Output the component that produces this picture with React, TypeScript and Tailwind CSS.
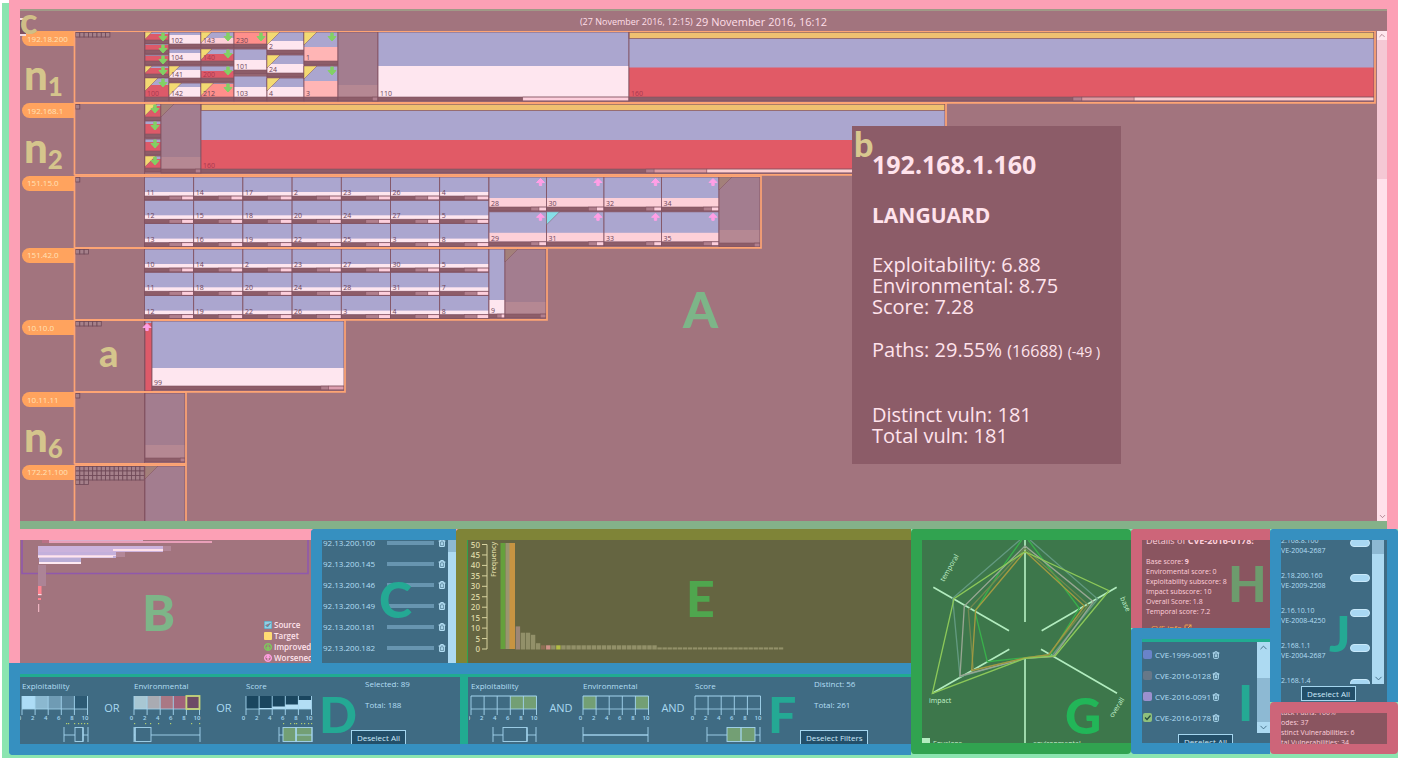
import React from "react";
import { Trash2, ChevronUp, ChevronDown, SquareArrowOutUpRight } from "lucide-react";

const C = {
  blue: "#aba6cf",
  pale: "#fee6ef",
  pink: "#fdd0d8",
  salmon: "#ffb5b5",
  coral: "#ff8f8b",
  red: "#dd5a69",
  gold: "#efc070",
  dark: "#8d5d69",
  mid: "#b17f8d",
  line: "#80505f",
};

type Cell = {
  x: number;
  y: number;
  w: number;
  h: number;
  split: number;
  low: string;
  label?: string;
  tri?: string;
  arrow?: "up" | "down";
  bar?: [number, number, string][];
  faded?: boolean;
  gold?: boolean;
};

const stdBar: [number, number, string][] = [
  [0.5, 0.76, C.mid],
  [0.76, 1, "#fdcfdc"],
];
const narrowBar: [number, number, string][] = [
  [0.73, 0.87, C.mid],
  [0.87, 1, "#fdcfdc"],
];

function Arrow({ x, y, dir }: { x: number; y: number; dir: "up" | "down" }) {
  return dir === "down" ? (
    <path
      d={`M${x - 1.2} ${y - 4}h2.4v3.5h2.8L${x} ${y + 4}L${x - 4} ${y - 0.5}h2.8z`}
      fill="#82d164"
      stroke="#82d164"
      strokeLinejoin="round"
    />
  ) : (
    <path
      d={`M${x - 1.2} ${y + 3.5}h2.4v-3h2.8L${x} ${y - 3.5}L${x - 4} ${y + 0.5}h2.8z`}
      fill="#ff9fe6"
      stroke="#ff9fe6"
      strokeLinejoin="round"
    />
  );
}

function CellShape({ c }: { c: Cell }) {
  const end = c.y + c.h;
  const bar = c.bar;
  return (
    <g>
      <rect x={c.x} y={c.y} width={c.w} height={c.h} fill={c.faded ? "#a37d8f" : C.blue} />
      <rect x={c.x} y={c.y + c.split} width={c.w} height={c.h - c.split} fill={c.low} />
      {c.gold && <rect x={c.x} y={c.y} width={c.w} height={6.5} fill={C.gold} stroke={C.line} strokeWidth={0.7} />}
      {bar && (
        <>
          <rect x={c.x} y={end} width={c.w} height={4} fill={C.dark} />
          {bar.map(([a, b, f], i) => (
            <rect key={i} x={c.x + a * c.w} y={end} width={(b - a) * c.w} height={4} fill={f} stroke={C.line} strokeWidth={0.4} />
          ))}
        </>
      )}
      <rect x={c.x} y={c.y} width={c.w} height={bar ? c.h + 4 : c.h} fill="none" stroke={C.line} strokeWidth={0.8} />
      {bar && <line x1={c.x} x2={c.x + c.w} y1={end} y2={end} stroke={C.line} strokeWidth={0.6} />}
      {c.tri && (
        <path
          d={`M${c.x} ${c.y}h${Math.min(13, c.h * 0.9)}L${c.x} ${c.y + Math.min(13, c.h * 0.9)}z`}
          fill={c.tri}
          stroke={C.line}
          strokeWidth={0.5}
        />
      )}
      {c.label && (
        <text x={c.x + 2} y={end - 1} fontSize={7} fill={c.low === C.red || c.gold ? "#a8384f" : "#6d4458"}>
          {c.label}
        </text>
      )}
      {c.arrow && <Arrow x={c.x + c.w - 6} y={c.y + 5} dir={c.arrow} />}
    </g>
  );
}

const Y = "#f3da72";
const noBar: [number, number, string][] = [];

const row1: Cell[] = [
  { x: 145, y: 1, w: 24, h: 8, split: 2, low: C.red, tri: Y, arrow: "down", bar: noBar },
  { x: 145, y: 13, w: 24, h: 6, split: 1, low: C.red, arrow: "down", bar: noBar },
  { x: 145, y: 24, w: 24, h: 6, split: 1, low: C.red, arrow: "down", bar: noBar },
  { x: 145, y: 35, w: 24, h: 8, split: 2, low: C.red, tri: Y, arrow: "down", bar: noBar },
  { x: 145, y: 47, w: 24, h: 19, split: 7, low: C.red, tri: Y, arrow: "down", label: "100", bar: noBar },
  { x: 169, y: 1, w: 32, h: 12, split: 3, low: C.pale, label: "102", bar: noBar },
  { x: 169, y: 18, w: 32, h: 12, split: 4, low: C.pale, label: "104", bar: noBar },
  { x: 169, y: 35, w: 32, h: 12, split: 4, low: C.pale, label: "141", tri: Y, bar: noBar },
  { x: 169, y: 52, w: 32, h: 14, split: 4, low: C.pale, label: "142", tri: Y, bar: noBar },
  { x: 201, y: 1, w: 33, h: 12, split: 6, low: C.pink, label: "143", tri: Y, arrow: "down", bar: noBar },
  { x: 201, y: 18, w: 33, h: 12, split: 5, low: C.red, label: "140", tri: Y, arrow: "down", bar: noBar },
  { x: 201, y: 35, w: 33, h: 12, split: 5, low: C.red, label: "200", arrow: "down", bar: noBar },
  { x: 201, y: 52, w: 33, h: 14, split: 1, low: C.coral, label: "212", tri: Y, arrow: "down", bar: noBar },
  { x: 234, y: 1, w: 33, h: 12, split: 0, low: C.coral, label: "230", arrow: "down", bar: noBar },
  { x: 234, y: 18, w: 33, h: 21, split: 11, low: C.pale, label: "101", bar: noBar },
  { x: 234, y: 45, w: 33, h: 21, split: 11, low: C.pale, label: "103", bar: noBar },
  { x: 267, y: 1, w: 37, h: 18, split: 9, low: C.pale, label: "2", tri: Y, bar: noBar },
  { x: 267, y: 24, w: 37, h: 18, split: 9, low: C.pale, label: "24", tri: Y, bar: noBar },
  { x: 267, y: 47, w: 37, h: 19, split: 9, low: C.pale, label: "4", tri: Y, bar: noBar },
  { x: 304, y: 1, w: 34, h: 29, split: 15, low: C.salmon, label: "1", tri: Y, arrow: "down", bar: noBar },
  { x: 304, y: 35, w: 34, h: 31, split: 15, low: C.salmon, label: "3", tri: Y, arrow: "down", bar: noBar },
  { x: 338, y: 1, w: 40, h: 65, split: 53, low: "#b58893", faded: true, bar: [[0.86, 1, C.mid]] },
  { x: 378, y: 1, w: 251, h: 65, split: 34, low: C.pale, label: "110", bar: [[0.577, 1, "#fdcfdc"]] },
  {
    x: 629, y: 1, w: 745, h: 65, split: 35.5, low: "#e15a66", label: "160", gold: true,
    bar: [[0.596, 0.608, C.mid], [0.608, 0.678, "#dd9aa0"], [0.678, 1, "#fdcfd0"]],
  },
];

const row2: Cell[] = [
  { x: 145, y: 1, w: 16, h: 13, split: 2, low: C.red, tri: Y, arrow: "down", bar: noBar },
  { x: 145, y: 18, w: 16, h: 13, split: 3, low: C.red, arrow: "down", bar: noBar },
  { x: 145, y: 36, w: 16, h: 12, split: 3, low: C.red, arrow: "down", bar: noBar },
  { x: 145, y: 53, w: 16, h: 12, split: 3, low: C.red, tri: Y, arrow: "down", bar: noBar },
  { x: 161, y: 1, w: 40, h: 65, split: 53, low: "#b58893", faded: true, tri: "#a3807a", bar: [[0.86, 1, C.mid]] },
  {
    x: 201, y: 1, w: 744, h: 65, split: 36, low: "#e15a66", label: "160", gold: true,
    bar: [[0.598, 0.609, C.mid], [0.609, 0.68, "#dd9aa0"], [0.68, 1, "#fdcfd0"]],
  },
];

function gridCells(labels: string[][]): Cell[] {
  return labels.flatMap((col, i) =>
    col.map((label, j) => ({
      x: 144.5 + i * 49.2,
      y: 1 + j * 23.3,
      w: 49.2,
      h: 19,
      split: 15,
      low: C.pale,
      label,
      bar: stdBar,
    })),
  );
}

const row3: Cell[] = [
  ...gridCells([
    ["11", "12", "13"], ["14", "15", "16"], ["17", "18", "19"], ["2", "20", "22"],
    ["23", "24", "25"], ["26", "27", "3"], ["4", "5", "8"],
  ]),
  ...["28", "29", "30", "31", "32", "33", "34", "35"].map((label, i): Cell => ({
    x: 489 + Math.floor(i / 2) * 57.5,
    y: 1 + (i % 2) * 34.8,
    w: 57.5,
    h: 30,
    split: 21,
    low: C.pink,
    label,
    arrow: "up",
    tri: label === "31" ? "#86dfe9" : undefined,
    bar: narrowBar,
  })),
  { x: 719, y: 1, w: 41, h: 66, split: 53, low: "#b58893", faded: true, tri: "#a3807a", bar: [[0.86, 1, C.mid]] },
];

const row4: Cell[] = [
  ...gridCells([
    ["10", "11", "12"], ["14", "18", "19"], ["2", "20", "22"], ["23", "24", "26"],
    ["27", "28", "3"], ["30", "31", "4"], ["5", "7", "8"],
  ]),
  { x: 489, y: 1, w: 16, h: 65, split: 51, low: C.pale, label: "9", bar: stdBar },
  { x: 505, y: 1, w: 41, h: 65, split: 53, low: "#b58893", faded: true, tri: "#a3807a", bar: [[0.86, 1, C.mid]] },
];

const row5: Cell[] = [
  { x: 145, y: 1, w: 7, h: 70, split: 2, low: C.red },
  { x: 152, y: 1, w: 192, h: 65, split: 47, low: C.pale, label: "99", bar: [[0.88, 0.92, C.mid], [0.92, 1, "#dd9fb0"]] },
];
const row6: Cell[] = [{ x: 145, y: 1, w: 40, h: 65, split: 52, low: "#b58893", faded: true, bar: [[0.88, 1, C.mid]] }];
const row7: Cell[] = [{ x: 145, y: 1, w: 40, h: 90, split: 90, low: "#b58893", faded: true, tri: "#a3807a" }];

const networks = [
  { name: "192.18.200", cells: row1, end: 1375, hosts: 8 },
  { name: "192.168.1", cells: row2, end: 946, hosts: 1 },
  { name: "151.15.0", cells: row3, end: 761, hosts: 1 },
  { name: "151.42.0", cells: row4, end: 547, hosts: 3 },
  { name: "10.10.0", cells: row5, end: 345, hosts: 6 },
  { name: "10.11.11", cells: row6, end: 186, hosts: 1 },
  { name: "172.21.100", cells: row7, end: 186, hosts: 51 },
];

function Letter({ children, className }: { children: React.ReactNode; className: string }) {
  return (
    <span className={`pointer-events-none absolute font-['Lato',sans-serif] font-black leading-none ${className}`}>
      {children}
    </span>
  );
}

function NetworkRow({ n, index }: { n: (typeof networks)[number]; index: number }) {
  return (
    <div className="flex items-start">
      <div className="ml-[2px] flex h-[15px] w-[52px] shrink-0 items-center overflow-hidden rounded-l-full bg-[#ffa35e] pl-[5px] text-[8px] leading-[14px] text-[#ffe2b8]">
        {n.name}
      </div>
      <svg className="h-[73px] min-w-0 flex-1 overflow-visible" aria-label={`Hosts of ${n.name}`}>
        <g transform="translate(-74 0)">
          {Array.from({ length: n.hosts }, (_, i) => (
            <rect
              key={i}
              x={75.5 + (i % 16) * 4.3}
              y={1.5 + Math.floor(i / 16) * 4.5}
              width={4.3}
              height={4.5}
              fill="#a5808a"
              stroke="#6f4957"
              strokeWidth={0.8}
            />
          ))}
          <line x1={144.5} x2={144.5} y1={1} y2={72} stroke={C.line} strokeWidth={0.8} />
          {n.cells.map((c, i) => (
            <CellShape key={i} c={c} />
          ))}
          {index === 4 && <Arrow x={147} y={7} dir="up" />}
          <path
            d={`M74.5 0V72.3M74.5 .2H${n.end}V71.8H74.5`}
            fill="none"
            stroke="#fda474"
            strokeWidth={1.7}
          />
        </g>
      </svg>
    </div>
  );
}

function Details() {
  return (
    <aside className="absolute left-[832px] top-[115px] h-[338px] w-[269px] bg-[#8c5c68] pl-[20px] pt-[25px] text-[20px] leading-[21px] text-[#ffe3ec]">
      <Letter className="left-[2px] top-px text-[34px] text-[#d8c88f]">b</Letter>
      <h2 className="text-[25px] font-bold leading-[26px]">192.168.1.160</h2>
      <h3 className="mt-[25px] text-[21px] font-bold leading-[26px]">LANGUARD</h3>
      <p className="mt-[26px]">Exploitability: 6.88</p>
      <p>Environmental: 8.75</p>
      <p>Score: 7.28</p>
      <p className="mt-[22px] whitespace-nowrap">
        Paths: 29.55% <span className="text-[16px]">(16688)</span> <span className="text-[14px]">(-49 )</span>
      </p>
      <p className="mt-[42px]">Distinct vuln: 181</p>
      <p>Total vuln: 181</p>
    </aside>
  );
}

function MainPanel() {
  return (
    <section className="bg-[#fca0b5] px-[11px] pt-[9px]">
      <div className="relative border-t-2 border-[#a09a87] bg-[#a2747e]">
        <header className="flex h-[20px] items-center justify-center gap-[3px] pt-[2px] text-[#ffdfe8]">
          <span className="text-[9px]">(27 November 2016, 12:15)</span>
          <h1 className="text-[11px]">29 November 2016, 16:12</h1>
        </header>
        <div className="flex h-[490px] overflow-hidden">
          <div className="grid h-[506px] min-w-0 flex-1 grid-rows-7">
            {networks.map((n, i) => (
              <NetworkRow key={n.name} n={n} index={i} />
            ))}
          </div>
          <div className="flex w-[10px] shrink-0 flex-col items-center justify-between bg-[#ffe0ea] text-[#9c6b78]">
            <div className="flex h-[148px] w-full flex-col items-center bg-[#f5c8d4]">
              <ChevronUp size={9} className="w-full bg-[#ffe6ee]" />
            </div>
            <ChevronDown size={9} />
          </div>
        </div>
        <div className="h-[8px] bg-[#84b189]" />
        <div className="absolute left-0 top-[7px] h-[18px] w-[6px] border-y-2 border-[#f3dce2] bg-[#80505f]" />
        <Letter className="left-0 top-[-9px] text-[36px] text-[#d0be87]">c</Letter>
        <Letter className="left-[4px] top-[42px] text-[42px] text-[#d5c58c]">
          n<sub className="bottom-[-6px] text-[26px]">1</sub>
        </Letter>
        <Letter className="left-[4px] top-[115px] text-[42px] text-[#d5c58c]">
          n<sub className="bottom-[-6px] text-[26px]">2</sub>
        </Letter>
        <Letter className="left-[4px] top-[404px] text-[42px] text-[#d5c58c]">
          n<sub className="bottom-[-6px] text-[26px]">6</sub>
        </Letter>
        <Letter className="left-[79px] top-[322px] text-[38px] text-[#d5c58c]">a</Letter>
        <Letter className="left-[663px] top-[273px] text-[50px] text-[#7db588]">A</Letter>
        <Details />
      </div>
    </section>
  );
}

function Overview() {
  const legend = [
    { name: "Source", icon: <path d="M0 0h8v8H0zM1.5 4l2 2 3-4" fill="#8fd0e4" stroke="#4f93ae" /> },
    { name: "Target", icon: <rect width="8" height="8" rx="1" fill="#ffdc73" /> },
    { name: "Improved", icon: <path d="M4 .7a3.3 3.3 0 1 0 .01 0zM4 2v4M2.4 4.3L4 6l1.6-1.7" fill="none" stroke="#7fc95d" strokeWidth="1.4" /> },
    { name: "Worsened", icon: <path d="M4 .7a3.3 3.3 0 1 0 .01 0zM4 6V2M2.4 3.7L4 2l1.6 1.7" fill="none" stroke="#ff9fe0" strokeWidth="1.4" /> },
  ];
  return (
    <section className="relative w-[302px] shrink-0 border-l-[11px] border-t-[11px] border-[#fca0b5] bg-[#a2747e]">
      <svg className="absolute inset-0 h-full w-full" aria-label="Overview">
        <path d="M2 0V33.5H288V0" fill="none" stroke="#9058ac" strokeWidth="1.6" />
        <rect x="22" y="0" width="10" height="3" fill="#ba7085" />
        <rect x="29" y="1" width="163" height="2" fill="#e99fb9" />
        <rect x="29" y="0" width="94" height="1" fill="#d9aecb" />
        <rect x="18" y="6" width="125" height="6" fill="#cbb2dc" />
        <rect x="93" y="9" width="50" height="2" fill="#ffe0ea" />
        <rect x="143" y="6" width="8" height="5" fill="#b38798" />
        <rect x="18" y="12" width="78" height="6" fill="#c4b0dc" />
        <rect x="18" y="15" width="78" height="1" fill="#f1d6e8" />
        <rect x="18" y="16" width="75" height="1.5" fill="#ffe6ee" />
        <rect x="96" y="12" width="9" height="5" fill="#b38798" />
        <rect x="19" y="18" width="42" height="4" fill="#b9add6" />
        <rect x="19" y="22" width="42" height="2" fill="#ffeaf2" />
        <rect x="18" y="25" width="8" height="21" fill="#ac8496" />
        <rect x="18" y="46" width="3.5" height="9" fill="#ff8390" />
        <rect x="18" y="54" width="3.5" height="1.2" fill="#ffdce5" />
        <rect x="18" y="58" width="3" height="2" fill="#ff8390" />
        <path d="M18.7 64V72" stroke="#ffc3d0" />
      </svg>
      <Letter className="left-[122px] top-[47px] text-[50px] text-[#7db588]">B</Letter>
      <ul className="absolute left-[244px] top-[79px] text-[8px] font-semibold leading-[11px] text-[#ffe3ec]">
        {legend.map((l) => (
          <li key={l.name} className="flex items-center gap-[2px]">
            <svg width="8" height="8" className="shrink-0">{l.icon}</svg>
            {l.name}
          </li>
        ))}
      </ul>
    </section>
  );
}

function HostList() {
  return (
    <section className="relative flex w-[145px] shrink-0 overflow-hidden rounded-tl-[4px] border-l-[11px] border-t-[11px] border-[#3690c0] bg-[#3f6b83]">
      <ul className="-mt-[8px] flex-1 text-[8px] leading-[21px] text-[#b3def4]">
        {["92.13.200.100", "92.13.200.145", "92.13.200.146", "92.13.200.149", "92.13.200.181", "92.13.200.182"].map((ip) => (
          <li key={ip} className="flex h-[21px] items-center">
            <span className="w-[65px] pl-px">{ip}</span>
            <div className="h-[4px] w-[47px] bg-[#6795b0]" />
            <button aria-label={`Remove ${ip}`} className="ml-[4px]">
              <Trash2 size={8} strokeWidth={3.5} />
            </button>
          </li>
        ))}
      </ul>
      <div className="w-[8px] bg-[#addaf2]">
        <div className="h-[12px] bg-[#8db9d3]" />
      </div>
      <Letter className="left-[57px] top-[34px] text-[50px] text-[#24a994]">C</Letter>
    </section>
  );
}

function Histogram() {
  const bars = [11, 8, 8, 7, 3, ...Array<number>(23).fill(2), ...Array<number>(25).fill(1)];
  const fills: Record<number, string> = { 0: "#9c8677", 5: "#8f6f55", 6: "#cf9289", 8: "#b3bd45" };
  return (
    <section className="relative min-w-0 flex-1 rounded-tl-[4px] border-l-[11px] border-t-[11px] border-[#7f8437] bg-[#656541]">
      <div className="absolute inset-y-0 left-0 w-px bg-[#31a350]" />
      <svg className="h-full w-full text-[8px]" aria-label="Frequency histogram">
        {Array.from({ length: 11 }, (_, i) => (
          <g key={i} fill="#d8d3a0">
            <text x="13" y={112 - i * 10.45} textAnchor="end" fontWeight="600">{i * 5}</text>
            <rect x="15" y={108.5 - i * 10.45} width="5" height="1" />
          </g>
        ))}
        <path d="M20 4.5V109" stroke="#d8d3a0" />
        <text transform="translate(29 37) rotate(-90)" fill="#d8d3a0" fontSize="7" fontWeight="600">Frequency</text>
        <rect x="33.5" y="3" width="5" height="106" fill="#65a03c" />
        <rect x="38.5" y="3" width="4.5" height="106" fill="#9a9570" />
        <rect x="42.5" y="3" width="5.5" height="106" fill="#c79442" />
        {bars.map((v, i) => (
          <rect key={i} x={48.7 + i * 5.06} y={109.5 - v * 2.1} width={4.4} height={v * 2.1} fill={fills[i] ?? "#929069"} />
        ))}
      </svg>
      <Letter className="left-[219px] top-[33px] text-[50px] text-[#4fa64e]">E</Letter>
    </section>
  );
}

type Axis = {
  title: string;
  fills: (string | null)[];
  box: [number, number, number, number, number];
  boxFill?: string;
  dots?: number[];
  steps?: boolean;
  noBox?: boolean;
  active?: number;
};

function AxisFilter({ a }: { a: Axis }) {
  const s = "#a5d6ef";
  const [lo, q1, med, q3, hi] = a.box;
  return (
    <div className="w-[72px] shrink-0">
      <h4 className="pl-[2px] text-[8px] leading-[12px] text-[#b3def4]">{a.title}</h4>
      <svg width="72" height="54" className="block overflow-visible" fontSize="6" fontWeight="600">
        {a.fills.map((f, i) => (
          <rect key={i} x={2 + i * 13.1} y="4" width="13.1" height="13" fill={f ?? "none"} />
        ))}
        {a.steps && <path d="M15 17V16H28V14.5H41V12.5H54V8H67.5V17z" fill="#b3def5" />}
        {!a.dots && <path d="M2 4H67.5" stroke={s} />}
        <path d="M2 17H67.5" stroke={s} strokeWidth="0.8" />
        {[0, 1, 2, 3, 4, 5].map((i) => (
          <g key={i}>
            <path d={`M${2 + i * 13.1} 4V23`} stroke={s} strokeWidth="0.9" />
            <text x={-0.5 + i * 13.1} y="28" textAnchor="middle" fill={s}>{i * 2}</text>
          </g>
        ))}
        {a.active !== undefined && (
          <rect x={2 + a.active * 13.1} y="4" width="13.1" height="13" fill="none" stroke="#c6d57a" strokeWidth="1.8" />
        )}
        {a.dots?.map((d) => <rect key={d} x={d} y="31" width="1.2" height="1.2" fill="#b3cf70" />)}
        <g fill="none" stroke={s} strokeWidth="0.9">
          {a.steps && <rect x={q3} y="35.5" width={hi - q3} height="14" fill={G} />}
          <path d={`M${lo} 35V50M${hi} 35V50M${lo} 43H${a.noBox ? hi : q1}M${q3} 43H${hi}`} />
          {!a.noBox && (
            <>
              <rect x={q1} y="35.5" width={q3 - q1} height="14" fill={a.boxFill ?? "none"} />
              <path d={`M${med} 35.5v14`} strokeWidth="1.3" />
            </>
          )}
        </g>
      </svg>
    </div>
  );
}

const G = "#739f74";
const clientAxes: Axis[] = [
  { title: "Exploitability", fills: ["#addcf6", "#8bb8d0", "#6f9bb4", "#56819a", "#2c5a74"], box: [44, 55, 63, 63, 68], dots: [46, 48, 54, 58, 61, 64, 67] },
  { title: "Environmental", fills: ["#a8c7d3", "#a9abb2", "#aa7884", "#a1627a", "#6d4a66"], box: [2, 3, 3, 19, 68], dots: [2, 13, 18, 26, 38, 59, 67], active: 4 },
  { title: "Score", fills: Array<string>(5).fill("#1a465f"), box: [35, 39, 52, 52, 68], boxFill: G, dots: [39, 46, 50, 52, 57, 60, 64, 67], steps: true },
];
const vulnAxes: Axis[] = [
  { title: "Exploitability", fills: [null, null, null, G, G], box: [24, 34, 58, 58, 67] },
  { title: "Environmental", fills: [G, null, null, null, G], box: [2, 2, 2, 2, 67], noBox: true },
  { title: "Score", fills: [null, null, null, null, null], box: [14, 34, 48, 62, 67], boxFill: G },
];

function FilterPanel({ axes, op, lines, action, letter }: { axes: Axis[]; op: string; lines: string[]; action: string; letter: string }) {
  return (
    <section className="relative flex h-[67px] min-w-0 items-start overflow-hidden pt-[3px]">
      {axes.map((a, i) => (
        <React.Fragment key={a.title}>
          <AxisFilter a={a} />
          {i < 2 && <span className="w-[40px] shrink-0 pt-[20px] text-center text-[11px] leading-[16px] text-[#a9d9f1]">{op}</span>}
        </React.Fragment>
      ))}
      <div className="ml-[35px] shrink-0 text-[8px] leading-[21px] text-[#b3def4]">
        <div className="-mt-[7px] pl-[14px]">
          {lines.map((l) => (
            <p key={l}>{l}</p>
          ))}
        </div>
        <button className="mt-[15px] block border border-[#a5d6ef] bg-[#234f69] px-[5px] leading-[14px] text-[#cdeafa]">{action}</button>
      </div>
      <Letter className="left-[299px] top-[12px] text-[50px] text-[#24a994]">{letter}</Letter>
    </section>
  );
}

function Radar() {
  return (
    <section className="relative w-[220px] shrink-0 overflow-hidden rounded-[4px] border-y-[11px] border-l-[11px] border-[#31a350] bg-[#3d774b]">
      <svg className="h-full w-full" aria-label="Score radar">
        <g transform="translate(-17 -20) scale(.33333)" fill="none" strokeWidth="4">
          <g stroke="#b2ecbf" strokeWidth="5">
            <path d="M360 50V306M360 412V680M85 202L312 332M635 202L410 332M82 520L313 388M636 520L408 388" />
          </g>
          <path d="M345 60L143 235L165 470L360 415L440 408L578 237L375 60" stroke="#639a80" />
          <path d="M350 60L300 130L210 275L247 425L360 413L435 405L523 265L370 60" stroke="#39b04b" />
          <path d="M360 78L178 258L165 468L360 415L445 410L565 245z" stroke="#98a693" />
          <path d="M360 85L190 270L205 450L360 414L430 405L550 255z" stroke="#71894f" />
          <path d="M360 94L212 270L200 452L360 414L432 404L538 258z" stroke="#a39a41" />
          <path d="M360 95L147 236L82 520L360 415L450 408L612 212z" stroke="#8cc859" />
        </g>
        <g fill="#c4f2cc" fontSize="7">
          <text transform="translate(22 42) rotate(-60)">temporal</text>
          <text transform="translate(198 58) rotate(66)">base</text>
          <text transform="translate(191 178) rotate(-58)">overall</text>
          <text x="7" y="163">impact</text>
          <rect x="0" y="198" width="8" height="8" fill="#b2ecbf" />
          <text x="11" y="206">Envelops</text>
          <text x="111" y="206">environmental</text>
        </g>
      </svg>
      <Letter className="left-[143px] top-[150px] text-[50px] text-[#22b658]">G</Letter>
    </section>
  );
}

function CveDetails() {
  return (
    <section className="relative h-[99px] overflow-hidden rounded-tl-[4px] border-l-[11px] border-t-[11px] border-[#cd6579] bg-[#8a5560] pl-[4px] text-[8px] leading-[10px] text-[#ffcfdb]">
      <h3 className="-mt-[6px] whitespace-nowrap text-[9px] leading-[14px]">
        Details of <b>CVE-2016-0178:</b>
      </h3>
      <div className="mt-[9px] text-[7px]">
        <p>Base score: <b>9</b></p>
        <p>Enviromental score: 0</p>
        <p>Exploitability subscore: 8</p>
        <p>Impact subscore: 10</p>
        <p>Overall Score: 1.8</p>
        <p>Temporal score: 7.2</p>
      </div>
      <a href="#cve" className="mt-[6px] flex items-center gap-[2px] pl-[5px] text-[#f0a74f]">
        CVE info <SquareArrowOutUpRight size={8} strokeWidth={3} />
      </a>
      <Letter className="left-[86px] top-[18px] text-[50px] text-[#6d9b6d]">H</Letter>
    </section>
  );
}

function CveList() {
  const items = [
    { id: "CVE-1999-0651", color: "bg-[#6a83c9]" },
    { id: "CVE-2016-0128", color: "bg-[#677888]" },
    { id: "CVE-2016-0091", color: "bg-[#9c90ce]" },
    { id: "CVE-2016-0178", color: "bg-[#8fc07c]", on: true },
  ];
  return (
    <section className="relative h-[126px] overflow-hidden rounded-l-[4px] border-y-[11px] border-l-[11px] border-[#3690c0] bg-[#3f6b83]">
      <div className="h-[3px] bg-[#21ab91]" />
      <div className="flex h-[91px]">
        <ul className="flex-1 pt-[2px] text-[8px] text-[#b3def4]">
          {items.map((it) => (
            <li key={it.id} className="flex h-[21px] items-center gap-px pl-px">
              <label className="flex items-center gap-[3px]">
                <span className="relative flex">
                  <input type="checkbox" defaultChecked={it.on} className={`h-[9px] w-[9px] appearance-none rounded-[2px] ${it.color}`} />
                  {it.on && (
                    <svg className="pointer-events-none absolute inset-0" width="9" height="9">
                      <path d="M2 4.5L4 6.5L7.5 2.5" fill="none" stroke="#244d3d" strokeWidth="1.3" />
                    </svg>
                  )}
                </span>
                {it.id}
              </label>
              <button aria-label={`Remove ${it.id}`}>
                <Trash2 size={8} strokeWidth={3} />
              </button>
            </li>
          ))}
        </ul>
        <div className="flex w-[13px] flex-col items-center bg-[#addaf2] text-[#3f6b83]">
          <ChevronUp size={11} className="mb-[25px]" />
          <div className="w-full flex-1 bg-[#8db9d3]" />
          <ChevronDown size={11} />
        </div>
      </div>
      <button className="ml-[36px] mt-px block border border-[#a5d6ef] bg-[#234f69] px-[5px] text-[8px] leading-[13px] text-[#cdeafa]">
        Deselect All
      </button>
      <Letter className="left-[96px] top-[38px] text-[50px] text-[#24a994]">I</Letter>
    </section>
  );
}

function Pairs() {
  const pairs = [
    ["2.168.8.100", "VE-2004-2687"],
    ["2.18.200.160", "VE-2009-2508"],
    ["2.16.10.10", "VE-2008-4250"],
    ["2.168.1.1", "VE-2004-2687"],
    ["2.168.1.4", ""],
  ];
  return (
    <section className="relative h-[173px] overflow-hidden rounded-t-[4px] border-x-[11px] border-t-[11px] border-[#3690c0] bg-[#3f6b83]">
      <div className="flex h-[144px] overflow-hidden pr-[3px]">
        <ul className="-mt-[4px] flex-1 text-[7px] leading-[10px] text-[#b3def4]">
          {pairs.map(([ip, cve]) => (
            <li key={ip} className="h-[35px]">
              <label className="flex items-start justify-between pr-[2px]">
                <span>
                  {ip}
                  <br />
                  {cve}
                </span>
                <input type="checkbox" role="switch" className="mt-[3px] h-[8px] w-[20px] appearance-none rounded-full border border-[#c8e9fa] bg-[#a8d8f3]" />
              </label>
            </li>
          ))}
        </ul>
        <div className="flex w-[12px] flex-col items-center justify-between bg-[#addaf2] text-[#3f6b83]">
          <div className="h-[14px] w-full bg-[#8db9d3]" />
          <ChevronDown size={11} />
        </div>
      </div>
      <button className="ml-[20px] mt-[2px] block border border-[#a5d6ef] bg-[#234f69] px-[5px] text-[8px] leading-[13px] text-[#cdeafa]">
        Deselect All
      </button>
      <Letter className="left-[48px] top-[68px] text-[50px] text-[#24a994]">J</Letter>
    </section>
  );
}

function Totals() {
  return (
    <section className="h-[52px] overflow-hidden rounded-[4px] border-[11px] border-b-[10px] border-[#cd6579] bg-[#8a5560]">
      <ul className="-mt-[5px] whitespace-nowrap text-[7px] leading-[10px] text-[#ffcfdb]">
        <li>tack Paths: 100%</li>
        <li>odes: 37</li>
        <li>stinct Vulnerabilities: 6</li>
        <li>tal Vulnerabilities: 34</li>
      </ul>
    </section>
  );
}

export default function App() {
  return (
    <main className="flex min-h-screen bg-white pl-[2px] pr-[9px] font-['Open_Sans','Noto_Sans',sans-serif]">
      <div className="mt-[3px] w-[7px] shrink-0 bg-[#8be5b0]" />
      <div className="flex min-w-0 flex-1 flex-col bg-[#8be5b0]">
        <MainPanel />
        <div className="flex h-[225px]">
          <div className="flex min-w-0 flex-1 flex-col">
            <div className="flex h-[134px] bg-[#fca0b5]">
              <Overview />
              <HostList />
              <Histogram />
            </div>
            <div className="flex-1 rounded-bl-[4px] border-y-[11px] border-l-[11px] border-[#3690c0] bg-[#3f6b83]">
              <div className="h-[3px] bg-[#21ab91]" />
              <div className="flex">
                <div className="w-[440px] shrink-0">
                  <FilterPanel axes={clientAxes} op="OR" lines={["Selected: 89", "Total: 188"]} action="Deselect All" letter="D" />
                </div>
                <div className="w-[8px] shrink-0 bg-[#21ab91]" />
                <div className="min-w-0 flex-1 pl-px">
                  <FilterPanel axes={vulnAxes} op="AND" lines={["Distinct: 56", "Total: 261"]} action="Deselect Filters" letter="F" />
                </div>
              </div>
            </div>
          </div>
          <Radar />
          <div className="w-[139px] shrink-0">
            <CveDetails />
            <CveList />
          </div>
          <div className="w-[128px] shrink-0">
            <Pairs />
            <Totals />
          </div>
        </div>
        <div className="h-[4px]" />
      </div>
    </main>
  );
}
